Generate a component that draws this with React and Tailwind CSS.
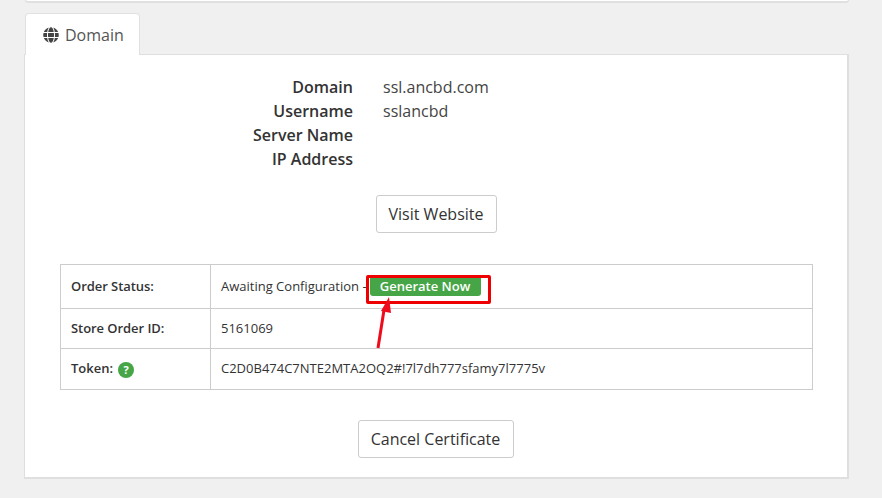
import React from "react";
import { FaGlobe } from "react-icons/fa";

const font = { fontFamily: '"Open Sans", sans-serif' };

function InfoRow({ label, value }) {
  return (
    <div className="flex h-6 leading-6 text-base">
      <div className="w-[328px] text-right font-semibold text-[#333]">{label}</div>
      <div className="ml-[30px] text-[#444]">{value}</div>
    </div>
  );
}

function Btn({ children, w }) {
  return (
    <button className={`h-[38px] ${w} bg-white border border-[#cccccc] rounded-[3px] text-base text-[#333]`}>
      {children}
    </button>
  );
}

export default function App() {
  return (
    <div className="w-[882px] h-[498px] overflow-hidden bg-[#f0f0f0]" style={font}>
      <div className="ml-[25px] w-[824px] h-[3px] bg-white border-b-2 border-x border-[#e0e0e0] rounded-b-[3px]" />
      <div className="ml-[24px] mt-[10px] w-[825px]">
        <div className="flex">
          <div className="relative z-10 -mb-px ml-px w-[115px] h-[42px] flex items-center gap-[5px] pl-[17px] bg-white border border-b-0 border-[#e0e0e0] rounded-t-[4px] text-base text-[#555]">
            <FaGlobe className="w-4 h-4 text-[#444]" />
            <span className="ml-px">Domain</span>
          </div>
        </div>
        <div className="relative h-[425px] bg-white border border-[#dfdfdf] border-b-2 border-r-2 pt-[20px]">
          <InfoRow label="Domain" value="ssl.ancbd.com" />
          <InfoRow label="Username" value="sslancbd" />
          <InfoRow label="Server Name" value="" />
          <InfoRow label="IP Address" value="" />
          <div className="flex justify-center mt-6">
            <Btn w="w-[121px]">Visit Website</Btn>
          </div>
          <table className="ml-[35px] mt-[31px] w-[753px] border-collapse text-[13px] text-[#333] table-fixed">
            <tbody>
              <tr className="h-[44px]">
                <td className="w-[150px] border border-[#cccccc] pl-[10px] font-semibold tracking-[-0.06px]">Order Status:</td>
                <td className="border border-[#cccccc] pl-[10px]">
                  Awaiting Configuration -{" "}
                  <span className="inline-block h-[20px] leading-[20px] w-[111px] pr-px text-center bg-[#46a546] rounded-[3px] text-white font-semibold">Generate Now</span>
                </td>
              </tr>
              <tr className="h-[40px]">
                <td className="border border-[#cccccc] pl-[10px] font-semibold tracking-[-0.06px]">Store Order ID:</td>
                <td className="border border-[#cccccc] pl-[10px]">5161069</td>
              </tr>
              <tr className="h-[41px]">
                <td className="border border-[#cccccc] pl-[10px] font-semibold">
                  <span className="inline-flex items-center gap-[5px]">
                    Token:
                    <span className="mt-[2px] w-4 h-4 rounded-full bg-[#46a546] text-white text-[11px] font-bold flex items-center justify-center">?</span>
                  </span>
                </td>
                <td className="border border-[#cccccc] pl-[10px]">C2D0B474C7NTE2MTA2OQ2#!7l7dh777sfamy7l7775v</td>
              </tr>
            </tbody>
          </table>
          <div className="flex justify-center mt-[30px] pr-[1px]">
            <Btn w="w-[156px]">Cancel Certificate</Btn>
          </div>
          <div className="absolute left-[341px] top-[220px] w-[125px] h-[29px] border-[3px] border-[#ee0000] rounded-[2px]" />
          <svg className="absolute left-[340px] top-[240px]" width="40" height="60" viewBox="0 0 40 60">
            <line x1="13" y1="53" x2="19" y2="15" stroke="#ee0c1c" strokeWidth="3" />
            <polygon points="24,2 26,18 16,16" fill="#ee0c1c" />
          </svg>
        </div>
      </div>
    </div>
  );
}
